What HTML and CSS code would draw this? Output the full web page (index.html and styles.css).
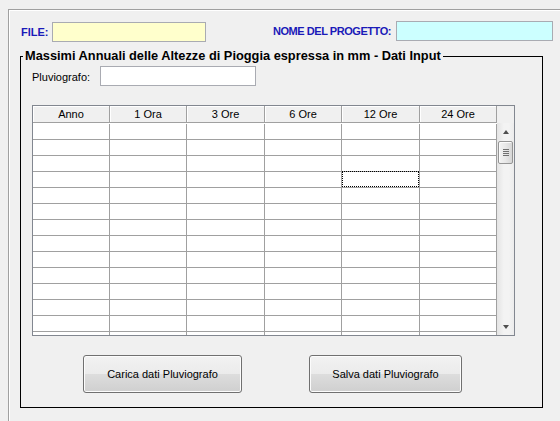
FILE: index.html
```html
<!DOCTYPE html>
<html>
<head>
<meta charset="utf-8">
<link rel="stylesheet" href="styles.css">
</head>
<body>
<div class="panel">
  <div class="toprow">
    <span class="lbl lbl-file">FILE:</span>
    <div class="inp inp-file"></div>
    <span class="lbl lbl-nome">NOME DEL PROGETTO:</span>
    <div class="inp inp-nome"></div>
  </div>
  <fieldset class="group">
    <legend>Massimi Annuali delle Altezze di Pioggia espressa in mm - Dati Input</legend>
    <div class="inner">
      <div class="pluvrow">
        <span class="pluv-lbl">Pluviografo:</span>
        <div class="inp inp-pluv"></div>
      </div>
      <div class="grid">
        <div class="cols">
          <div class="hdr">
            <div class="hc">Anno</div>
            <div class="hc">1 Ora</div>
            <div class="hc">3 Ore</div>
            <div class="hc">6 Ore</div>
            <div class="hc">12 Ore</div>
            <div class="hc">24 Ore</div>
          </div>
          <div class="data">
            <div class="row"><div></div><div></div><div></div><div></div><div></div><div></div></div>
            <div class="row"><div></div><div></div><div></div><div></div><div></div><div></div></div>
            <div class="row"><div></div><div></div><div></div><div></div><div></div><div></div></div>
            <div class="row"><div></div><div></div><div></div><div></div><div class="focus"></div><div></div></div>
            <div class="row"><div></div><div></div><div></div><div></div><div></div><div></div></div>
            <div class="row"><div></div><div></div><div></div><div></div><div></div><div></div></div>
            <div class="row"><div></div><div></div><div></div><div></div><div></div><div></div></div>
            <div class="row"><div></div><div></div><div></div><div></div><div></div><div></div></div>
            <div class="row"><div></div><div></div><div></div><div></div><div></div><div></div></div>
            <div class="row"><div></div><div></div><div></div><div></div><div></div><div></div></div>
            <div class="row"><div></div><div></div><div></div><div></div><div></div><div></div></div>
            <div class="row"><div></div><div></div><div></div><div></div><div></div><div></div></div>
            <div class="row"><div></div><div></div><div></div><div></div><div></div><div></div></div>
            <div class="row"><div></div><div></div><div></div><div></div><div></div><div></div></div>
          </div>
        </div>
        <div class="side">
          <div class="corner"></div>
          <div class="vscroll">
            <div class="sbtn"><span class="arr-up"></span></div>
            <div class="track">
              <div class="thumb"><span></span><span></span><span></span><span></span></div>
            </div>
            <div class="sbtn"><span class="arr-down"></span></div>
          </div>
        </div>
      </div>
      <div class="buttons">
        <div class="btn btn-carica">Carica dati Pluviografo</div>
        <div class="btn btn-salva">Salva dati Pluviografo</div>
      </div>
    </div>
  </fieldset>
</div>
</body>
</html>
```
FILE: styles.css
```css
html, body {
  margin: 0;
  padding: 0;
}
body {
  background: #f0f0f0;
  font-family: "Liberation Sans", Arial, sans-serif;
  font-size: 11px;
  color: #000;
  width: 560px;
  height: 421px;
  overflow: hidden;
}
.panel {
  margin: 9px 0 0 8px;
  height: 412px;
  border-top: 1px solid #a0a0a0;
  border-left: 1px solid #a0a0a0;
  box-shadow: inset 1px 1px 0 #ffffff;
  box-sizing: border-box;
}
.toprow {
  display: flex;
  align-items: flex-start;
  padding: 11px 0 0 12px;
  height: 20px;
}
.lbl {
  font-weight: bold;
  color: #1a1ab8;
  line-height: 20px;
  height: 20px;
  white-space: nowrap;
}
.lbl-file {
  width: 31px;
  margin-top: 1px;
}
.lbl-nome {
  width: 123px;
  margin-left: 67px;
  letter-spacing: -0.45px;
}
.inp {
  box-sizing: border-box;
  height: 20px;
  border: 1px solid #a9abb2;
  background: #ffffff;
}
.inp-file {
  width: 154px;
  margin-top: 1px;
  background: #ffffcc;
}
.inp-nome {
  width: 157px;
  background: #ccffff;
}
.group {
  margin: 7px 0 0 11px;
  width: 523px;
  height: 360px;
  box-sizing: border-box;
  border: 1px solid #000;
  padding: 0;
  min-width: 0;
}
.group legend {
  font-weight: bold;
  font-size: 12.8px;
  line-height: 16px;
  padding: 0 2px;
  margin-left: 2px;
  white-space: nowrap;
}
.inner {
  padding: 2px 0 0 11px;
}
.pluvrow {
  display: flex;
  height: 20px;
}
.pluv-lbl {
  width: 68px;
  line-height: 20px;
  padding-top: 1px;
}
.inp-pluv {
  width: 156px;
}
.grid {
  margin-top: 19px;
  width: 483px;
  height: 231px;
  box-sizing: border-box;
  border: 1px solid #828790;
  display: flex;
  background: #f0f0f0;
}
.cols {
  width: 464px;
}
.hdr, .row {
  display: grid;
  grid-template-columns: 77px 77px 78px 77px 78px 77px;
}
.hdr {
  height: 17px;
}
.hc {
  box-sizing: border-box;
  height: 17px;
  border-right: 1px solid #a0a0a0;
  border-bottom: 1px solid #a0a0a0;
  box-shadow: inset 1px 1px 0 #ffffff;
  background: #f0f0f0;
  text-align: center;
  line-height: 16px;
}
.data {
  height: 212px;
  box-sizing: border-box;
  padding-top: 1px;
  background: #ffffff;
  overflow: hidden;
}
.row > div {
  box-sizing: border-box;
  height: 16px;
  border-right: 1px solid #a0a0a0;
  border-bottom: 1px solid #a0a0a0;
  position: relative;
}
.row > div.focus::after {
  content: "";
  position: absolute;
  left: 0;
  top: -1px;
  right: 0;
  bottom: 0;
  border: 1px dotted #000;
}
.side {
  width: 17px;
  display: flex;
  flex-direction: column;
}
.corner {
  height: 17px;
  background: #f0f0f0;
}
.vscroll {
  height: 212px;
  display: flex;
  flex-direction: column;
  background: linear-gradient(to right, #e4e4e4, #f3f3f3 40%, #f3f3f3 70%, #ececec);
}
.sbtn {
  height: 17px;
  display: flex;
  align-items: center;
  justify-content: center;
}
.arr-up {
  width: 0;
  height: 0;
  border-left: 3.5px solid transparent;
  border-right: 3.5px solid transparent;
  border-bottom: 4px solid #505050;
}
.arr-down {
  width: 0;
  height: 0;
  border-left: 3.5px solid transparent;
  border-right: 3.5px solid transparent;
  border-top: 4px solid #505050;
}
.track {
  flex: 1;
  padding: 1px 0 0 1px;
}
.thumb {
  box-sizing: border-box;
  width: 15px;
  height: 23px;
  border: 1px solid #959595;
  border-radius: 2px;
  background: linear-gradient(to right, #f3f3f3, #e8e8e8 50%, #d6d6d6);
  box-shadow: inset 1px 1px 0 #fbfbfb;
  display: flex;
  flex-direction: column;
  align-items: center;
  justify-content: center;
  gap: 1px;
}
.thumb span {
  width: 6px;
  height: 1px;
  background: #707070;
}
.buttons {
  display: flex;
  margin-top: 19px;
  padding-left: 51px;
  gap: 67px;
}
.btn {
  box-sizing: border-box;
  height: 38px;
  border: 1px solid #707070;
  border-radius: 3px;
  background: linear-gradient(#f2f2f2 0%, #ebebeb 50%, #dddddd 50%, #cfcfcf 100%);
  box-shadow: inset 0 0 0 1px #fcfcfc;
  display: flex;
  align-items: center;
  justify-content: center;
  white-space: nowrap;
}
.btn-carica {
  width: 159px;
}
.btn-salva {
  width: 153px;
}
```
